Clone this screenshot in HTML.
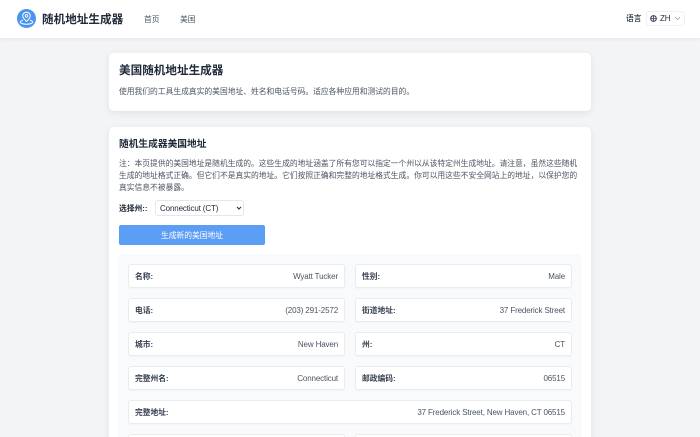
<!DOCTYPE html>
<html lang="zh">
<head>
<meta charset="utf-8">
<style>
*{box-sizing:border-box;margin:0;padding:0}
html,body{width:700px;height:437px;overflow:hidden;background:#f3f4f6}
body{position:relative;font-family:"Liberation Sans","Noto Sans CJK SC",sans-serif;color:#1f2937}
.abs{position:absolute;white-space:nowrap}
header{position:absolute;left:0;top:0;width:700px;height:38px;background:#fff;box-shadow:0 1px 4px rgba(0,0,0,.07)}
.card{position:absolute;left:109px;width:482px;background:#fff;border-radius:5px;box-shadow:0 2px 8px rgba(0,0,0,.08)}
.t{font-size:7.78px;line-height:12px;color:#4b5563}
.panel{position:absolute;left:118px;top:254px;width:464px;height:190px;background:#f9fafb;border-radius:5px}
.row{position:absolute;height:24px;background:#fff;border:1px solid #e9ebef;border-radius:3px;box-shadow:0 1px 1px rgba(0,0,0,.03);display:flex;justify-content:space-between;align-items:center;padding:0 6px 0 6px;font-size:7.78px}
.row b{font-weight:700;color:#374151}
.row span{color:#4b5563;font-size:8px;letter-spacing:-.14px}
.l{left:128px;width:217px}
.r{left:355px;width:217px}
</style>
</head>
<body>
<header></header>
<svg class="abs" style="left:17px;top:9px" width="19" height="19" viewBox="0 0 19 19">
<circle cx="9.5" cy="9.5" r="9.5" fill="#4b94ee"/>
<path d="M9.5 3.2c-2.2 0-3.8 1.6-3.8 3.6 0 2.2 2.3 4.3 3.8 5.6 1.500-1.300 3.800-3.400 3.800-5.600 0-2-1.600-3.600-3.800-3.600z" fill="none" stroke="#fff" stroke-width="1"/>
<circle cx="9.500" cy="6.900" r="1.300" fill="none" stroke="#fff" stroke-width=".9"/>
<path d="M6 11.200c-1.500.5-2.700 1.300-2.700 2.100 0 1 2.800 1.900 6.200 1.900s6.200-.9 6.200-1.900c0-.8-1.200-1.600-2.700-2.100" fill="none" stroke="#fff" stroke-width="1"/>
</svg>
<div class="abs" style="left:42px;top:11px;font-size:11.6px;line-height:18px;font-weight:700;color:#1f2937">随机地址生成器</div>
<div class="abs t" style="left:144px;top:14px">首页</div>
<div class="abs t" style="left:180px;top:14px">美国</div>
<div class="abs" style="left:626px;top:13px;font-size:7.78px;line-height:12px;font-weight:500;color:#1f2937">语言</div>
<div class="abs" style="left:646px;top:11px;width:39px;height:15px;border:1px solid #f0f1f3;border-radius:3px"></div>
<svg class="abs" style="left:650px;top:15px" width="7" height="7" viewBox="0 0 7 7"><circle cx="3.500" cy="3.500" r="2.800" fill="none" stroke="#374151" stroke-width="1.100"/><path d="M.7 3.500h5.600M3.500.7v5.600" stroke="#374151" stroke-width=".8"/></svg>
<div class="abs" style="left:660px;top:13px;font-size:8px;line-height:12px;color:#1f2937;letter-spacing:-.1px">ZH</div>
<svg class="abs" style="left:674px;top:16px" width="7" height="5" viewBox="0 0 7 5"><path d="M1 1l2.500 2.500L6 1" fill="none" stroke="#9ca3af" stroke-width=".8"/></svg>

<div class="card" style="top:53px;height:58px"></div>
<div class="abs" style="left:119px;top:62px;font-size:11.6px;line-height:18px;font-weight:700;color:#1f2937">美国随机地址生成器</div>
<div class="abs t" style="left:119px;top:86px">使用我们的工具生成真实的美国地址、姓名和电话号码。适应各种应用和测试的目的。</div>

<div class="card" style="top:127px;height:320px"></div>
<div class="abs" style="left:119px;top:138px;font-size:9.72px;line-height:14px;font-weight:700;color:#1f2937">随机生成器美国地址</div>
<div class="abs t" style="left:119px;top:158px">注：本页提供的美国地址是随机生成的。这些生成的地址涵盖了所有您可以指定一个州以从该特定州生成地址。请注意，虽然这些随机</div>
<div class="abs t" style="left:119px;top:170px">生成的地址格式正确。但它们不是真实的地址。它们按照正确和完整的地址格式生成。你可以用这些不安全网站上的地址，以保护您的</div>
<div class="abs t" style="left:119px;top:182px">真实信息不被暴露。</div>
<div class="abs" style="left:119px;top:203px;font-size:7.78px;line-height:12px;font-weight:700;color:#1f2937">选择州::</div>
<div class="abs" style="left:155px;top:200px;width:89px;height:16px;border:1px solid #e5e7eb;border-radius:3px;background:#fff"></div>
<div class="abs" style="left:160px;top:203px;font-size:8px;line-height:12px;color:#1f2937;letter-spacing:-.14px">Connecticut (CT)</div>
<svg class="abs" style="left:236px;top:206px" width="6" height="5" viewBox="0 0 6 5"><path d="M1 1l2 2 2-2" fill="none" stroke="#1f2937" stroke-width="1"/></svg>
<div class="abs" style="left:119px;top:225px;width:146px;height:20px;background:#5c9df5;border-radius:2px;color:#fff;font-size:7.78px;line-height:21px;text-align:center">生成新的美国地址</div>

<div class="panel"></div>
<div class="row l" style="top:264px"><b>名称:</b><span>Wyatt Tucker</span></div>
<div class="row r" style="top:264px"><b>性别:</b><span>Male</span></div>
<div class="row l" style="top:298px"><b>电话:</b><span>(203) 291-2572</span></div>
<div class="row r" style="top:298px"><b>街道地址:</b><span>37 Frederick Street</span></div>
<div class="row l" style="top:332px"><b>城市:</b><span>New Haven</span></div>
<div class="row r" style="top:332px"><b>州:</b><span>CT</span></div>
<div class="row l" style="top:366px"><b>完整州名:</b><span>Connecticut</span></div>
<div class="row r" style="top:366px"><b>邮政编码:</b><span>06515</span></div>
<div class="row" style="left:128px;top:400px;width:444px"><b>完整地址:</b><span>37 Frederick Street, New Haven, CT 06515</span></div>
<div class="row l" style="top:434px"></div>
<div class="row r" style="top:434px"></div>
</body>
</html>
